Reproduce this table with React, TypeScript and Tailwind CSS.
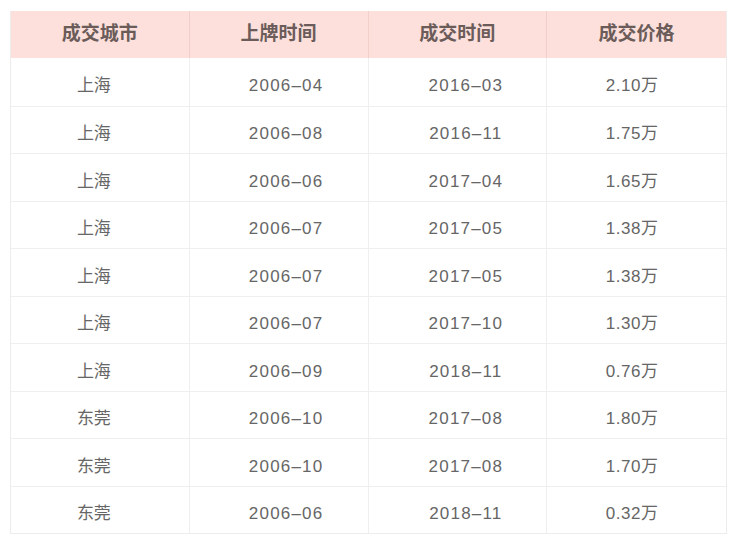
import React from "react";

const rows: [string, string, string, string][] = [
  ["上海", "2006–04", "2016–03", "2.10万"],
  ["上海", "2006–08", "2016–11", "1.75万"],
  ["上海", "2006–06", "2017–04", "1.65万"],
  ["上海", "2006–07", "2017–05", "1.38万"],
  ["上海", "2006–07", "2017–05", "1.38万"],
  ["上海", "2006–07", "2017–10", "1.30万"],
  ["上海", "2006–09", "2018–11", "0.76万"],
  ["东莞", "2006–10", "2017–08", "1.80万"],
  ["东莞", "2006–10", "2017–08", "1.70万"],
  ["东莞", "2006–06", "2018–11", "0.32万"],
];

const font = { fontFamily: '"Liberation Sans", "Noto Sans CJK SC", sans-serif' };

export default function App() {
  return (
    <div className="w-[740px] h-[543px] bg-white pt-[11px] pl-[10px]" style={font}>
      <div className="w-[717px] border border-[#ececec] border-t-0">
        <div className="grid grid-cols-4 h-[47px] bg-[#fde0db] text-[#6b5c5a] text-[19px] font-semibold">
          <div className="flex items-center justify-center border-r border-[#f3cfca]">成交城市</div>
          <div className="flex items-center justify-center border-r border-[#f3cfca]">上牌时间</div>
          <div className="flex items-center justify-center border-r border-[#f3cfca]">成交时间</div>
          <div className="flex items-center justify-center">成交价格</div>
        </div>
        {rows.map((r, i) => (
          <div
            key={i}
            className={
              "grid grid-cols-4 h-[47.5px] text-[17px] text-[#666666] " +
              (i > 0 ? "border-t border-[#efefef]" : "")
            }
          >
            <div className="flex items-center justify-center pt-[8px] pr-[12px] border-r border-[#efefef]">{r[0]}</div>
            <div className="flex items-center justify-center pt-[8px] pl-[15px] tracking-[1.2px] border-r border-[#efefef]">{r[1]}</div>
            <div className="flex items-center justify-center pt-[8px] pl-[17px] tracking-[1.2px] border-r border-[#efefef]">{r[2]}</div>
            <div className="flex items-center justify-center pt-[8px] pr-[9px] tracking-[0.5px]">{r[3]}</div>
          </div>
        ))}
      </div>
    </div>
  );
}
